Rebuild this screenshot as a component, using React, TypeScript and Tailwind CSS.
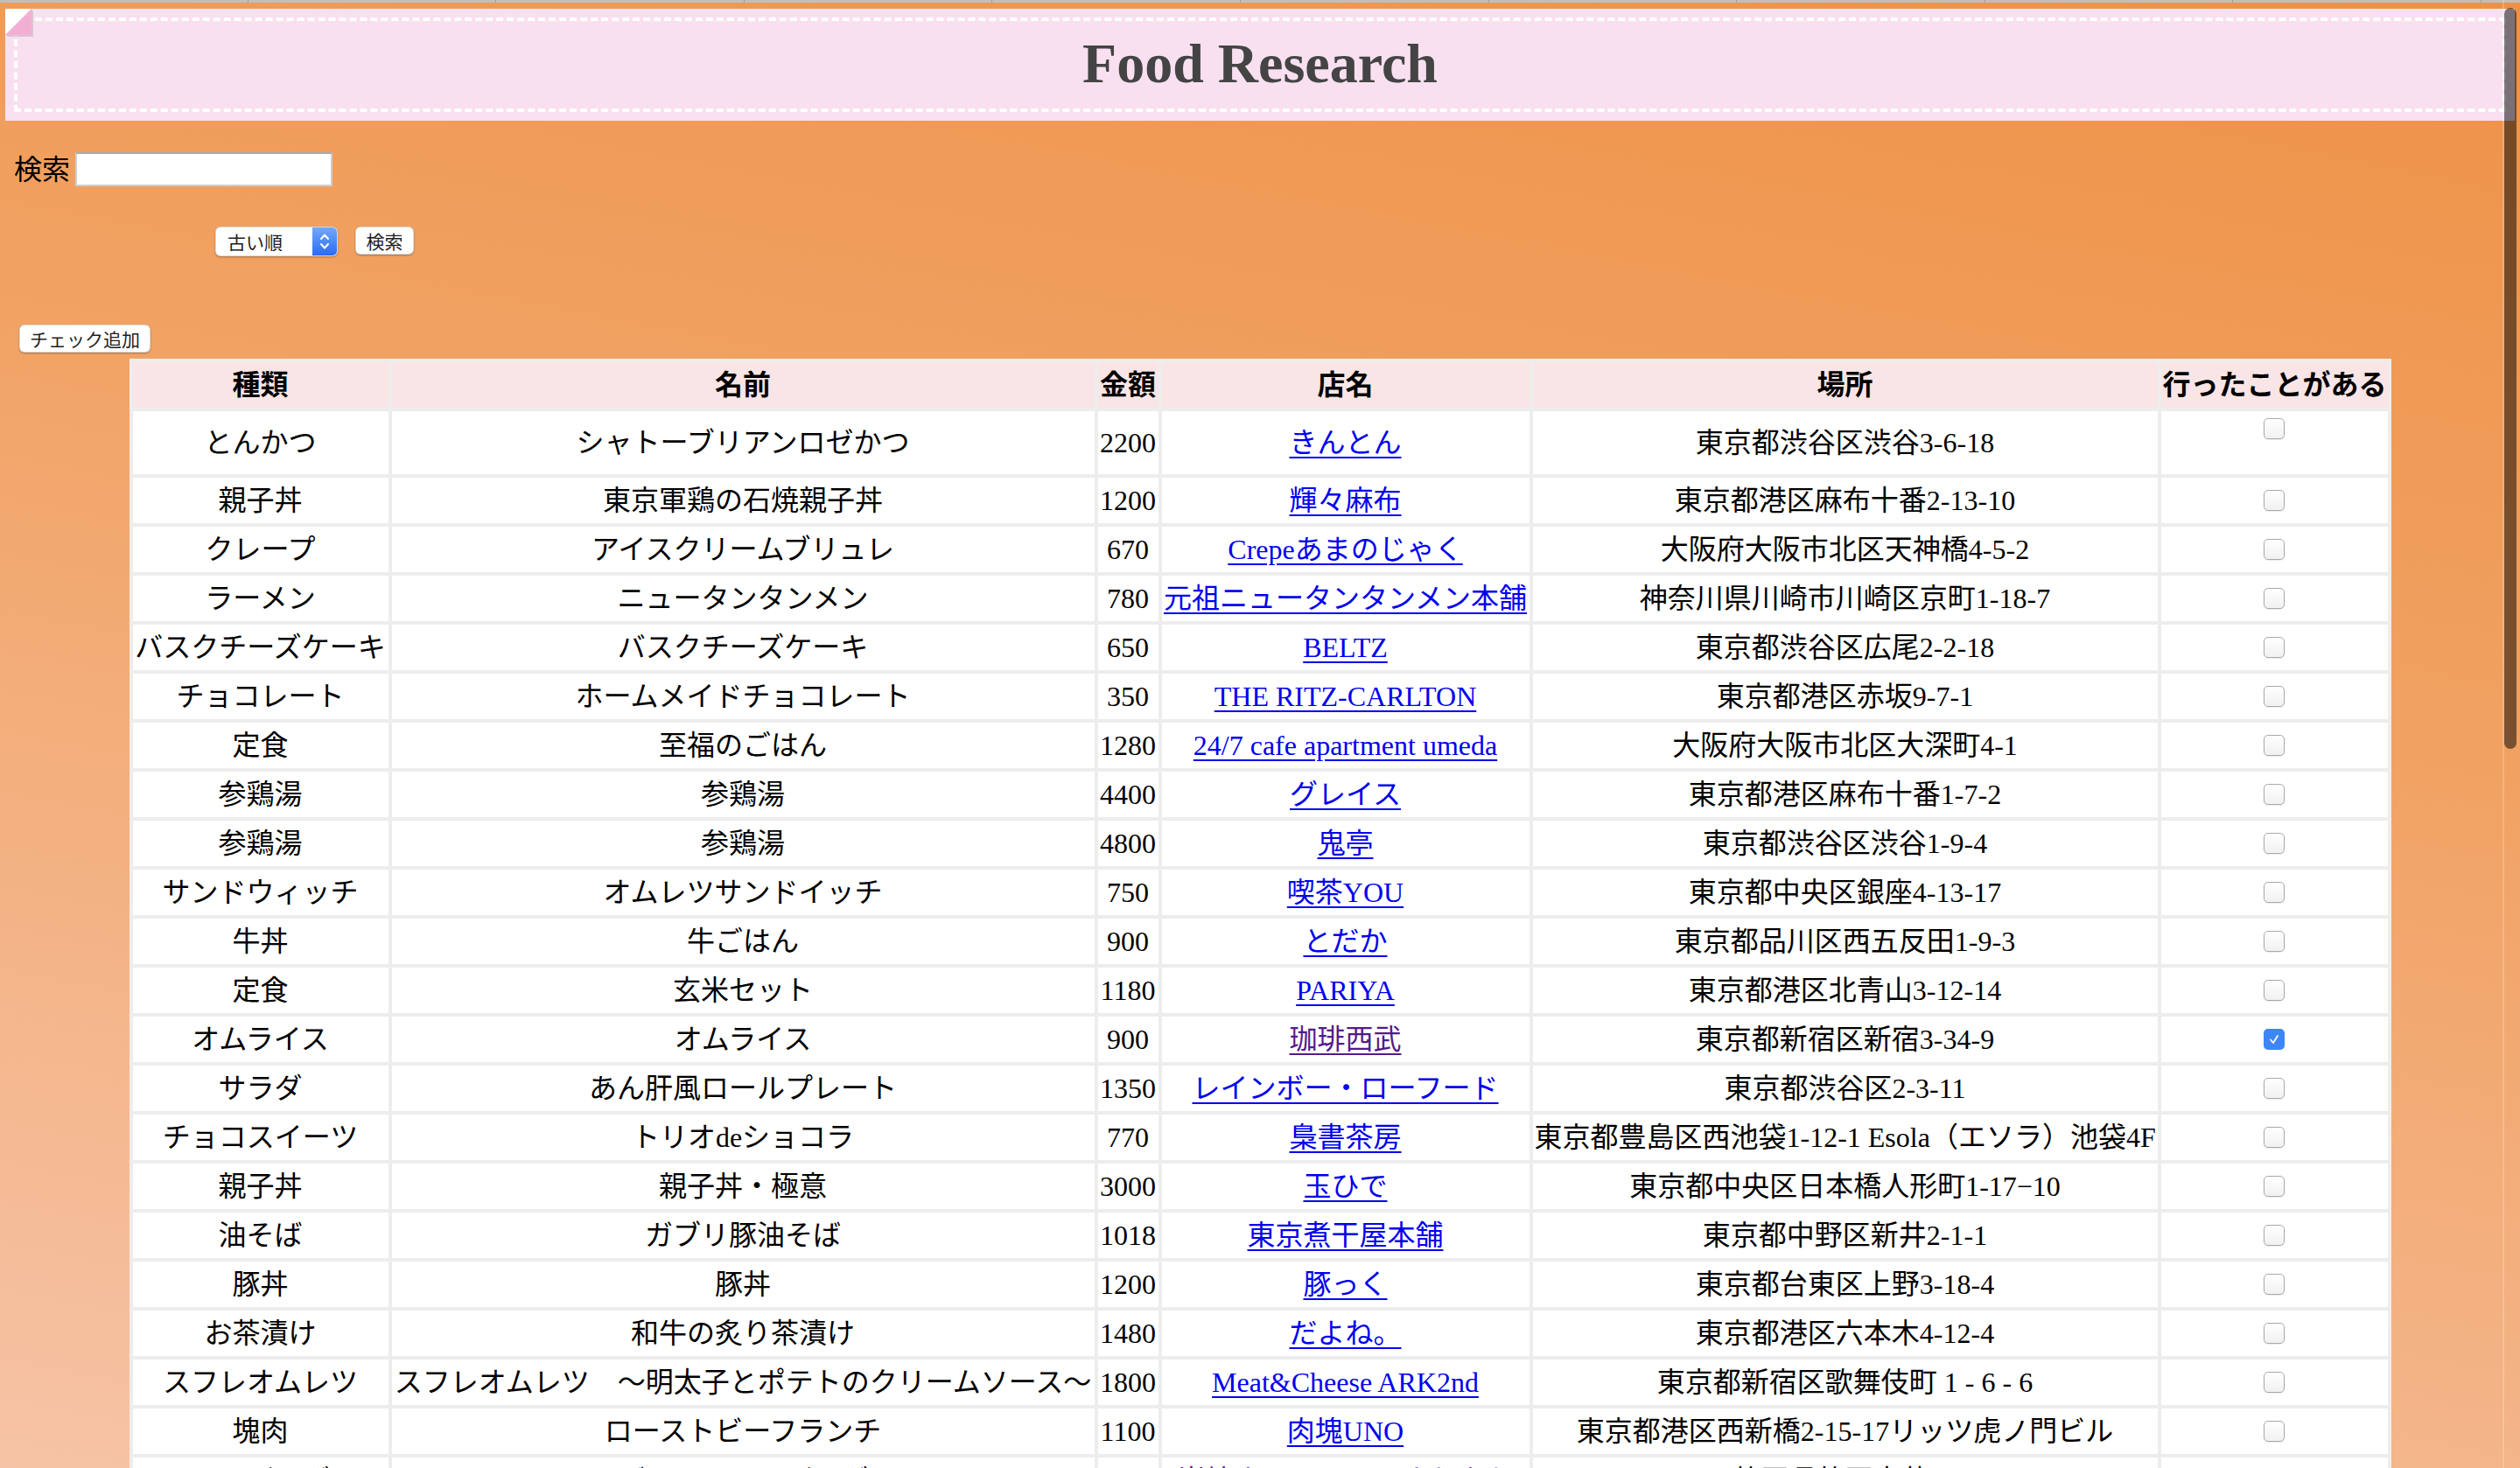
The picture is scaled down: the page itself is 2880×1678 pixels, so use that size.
import React from "react";

type Row = {
  kind: string;
  name: string;
  price: string;
  shop: string;
  place: string;
  visited?: boolean;
  checked?: boolean;
};

const ROWS: Row[] = [
  { kind: "とんかつ", name: "シャトーブリアンロゼかつ", price: "2200", shop: "きんとん", place: "東京都渋谷区渋谷3-6-18" },
  { kind: "親子丼", name: "東京軍鶏の石焼親子丼", price: "1200", shop: "輝々麻布", place: "東京都港区麻布十番2-13-10" },
  { kind: "クレープ", name: "アイスクリームブリュレ", price: "670", shop: "Crepeあまのじゃく", place: "大阪府大阪市北区天神橋4-5-2" },
  { kind: "ラーメン", name: "ニュータンタンメン", price: "780", shop: "元祖ニュータンタンメン本舗", place: "神奈川県川崎市川崎区京町1-18-7" },
  { kind: "バスクチーズケーキ", name: "バスクチーズケーキ", price: "650", shop: "BELTZ", place: "東京都渋谷区広尾2-2-18" },
  { kind: "チョコレート", name: "ホームメイドチョコレート", price: "350", shop: "THE RITZ-CARLTON", place: "東京都港区赤坂9-7-1" },
  { kind: "定食", name: "至福のごはん", price: "1280", shop: "24/7 cafe apartment umeda", place: "大阪府大阪市北区大深町4-1" },
  { kind: "参鶏湯", name: "参鶏湯", price: "4400", shop: "グレイス", place: "東京都港区麻布十番1-7-2" },
  { kind: "参鶏湯", name: "参鶏湯", price: "4800", shop: "鬼亭", place: "東京都渋谷区渋谷1-9-4" },
  { kind: "サンドウィッチ", name: "オムレツサンドイッチ", price: "750", shop: "喫茶YOU", place: "東京都中央区銀座4-13-17" },
  { kind: "牛丼", name: "牛ごはん", price: "900", shop: "とだか", place: "東京都品川区西五反田1-9-3" },
  { kind: "定食", name: "玄米セット", price: "1180", shop: "PARIYA", place: "東京都港区北青山3-12-14" },
  { kind: "オムライス", name: "オムライス", price: "900", shop: "珈琲西武", place: "東京都新宿区新宿3-34-9", visited: true, checked: true },
  { kind: "サラダ", name: "あん肝風ロールプレート", price: "1350", shop: "レインボー・ローフード", place: "東京都渋谷区2-3-11" },
  { kind: "チョコスイーツ", name: "トリオdeショコラ", price: "770", shop: "梟書茶房", place: "東京都豊島区西池袋1-12-1 Esola（エソラ）池袋4F" },
  { kind: "親子丼", name: "親子丼・極意", price: "3000", shop: "玉ひで", place: "東京都中央区日本橋人形町1-17−10" },
  { kind: "油そば", name: "ガブリ豚油そば", price: "1018", shop: "東京煮干屋本舗", place: "東京都中野区新井2-1-1" },
  { kind: "豚丼", name: "豚丼", price: "1200", shop: "豚っく", place: "東京都台東区上野3-18-4" },
  { kind: "お茶漬け", name: "和牛の炙り茶漬け", price: "1480", shop: "だよね。", place: "東京都港区六本木4-12-4" },
  { kind: "スフレオムレツ", name: "スフレオムレツ　～明太子とポテトのクリームソース～", price: "1800", shop: "Meat&Cheese ARK2nd", place: "東京都新宿区歌舞伎町 1 - 6 - 6" },
  { kind: "塊肉", name: "ローストビーフランチ", price: "1100", shop: "肉塊UNO", place: "東京都港区西新橋2-15-17リッツ虎ノ門ビル" },
  { kind: "ハンバーグ", name: "げんこつハンバーグ", price: "1500", shop: "炭焼きレストランさわやか", place: "静岡県静岡市葵区", visited: true },
];

const HEADS = ["種類", "名前", "金額", "店名", "場所", "行ったことがある"];
const COLS = ["w-[292px]", "w-[803px]", "w-[69px]", "w-[420px]", "w-[714px]", "w-[259px]"];

function FoldedCorner() {
  return (
    <svg className="absolute left-0 top-0" width="34" height="34" viewBox="0 0 34 34" aria-hidden="true">
      <polygon points="0,0 30,0 0,30" fill="#ffffff" />
      <polygon points="30,1 32,3 32,32 3,32 1,30" fill="rgba(0,0,0,0.12)" />
      <polygon points="30,0 30,30 0,30" fill="#f3afd3" />
    </svg>
  );
}

function CheckBox({ checked }: { checked?: boolean }) {
  if (checked) {
    return (
      <span className="inline-flex h-[24px] w-[24px] items-center justify-center rounded-[5px] bg-[#3d86f6]">
        <svg width="14" height="14" viewBox="0 0 14 14" aria-hidden="true">
          <path d="M3 7.5 L6 11 L11 3" fill="none" stroke="white" strokeWidth="1.8" strokeLinecap="round" strokeLinejoin="round" />
        </svg>
      </span>
    );
  }
  return (
    <span className="inline-block h-[24px] w-[24px] rounded-[5px] border-[1.5px] border-[#a9a9a9] bg-gradient-to-b from-white to-[#f1f1f1] shadow-[0_1px_1px_rgba(0,0,0,0.08)]" />
  );
}

export default function App() {
  return (
    <div className="relative h-[1678px] w-full overflow-hidden bg-[linear-gradient(191deg,#ee9147_0%,#f1a263_40%,#f6c3a6_100%)] font-['Liberation_Serif','Noto_Sans_CJK_JP',serif] text-black">
      {/* tab strip */}
      <div className="flex h-[3px] bg-[#bfbfbf]">
        {Array.from({ length: 10 }).map((_, i) => (
          <div key={i} className="h-full w-[283.6px] border-r border-[#9d9d9d]" />
        ))}
      </div>

      {/* Header */}
      <header className="relative mx-[6px] mt-[7px] bg-[#f9e0f0] p-[10px]">
        <FoldedCorner />
        <div className="flex h-[108px] items-center justify-center border-4 border-dashed border-white pb-[3px]">
          <h1 className="text-[64px] font-bold leading-none text-[#444444]">Food Research</h1>
        </div>
      </header>

      {/* Search */}
      <form onSubmit={(e) => e.preventDefault()}>
        <div className="mt-[36px] flex items-center gap-[6px] pl-[16px]">
          <label htmlFor="q" className="text-[32px] leading-none">
            検索
          </label>
          <input
            id="q"
            type="text"
            className="h-[39px] w-[294px] border-2 border-[#cdcdcd] border-t-[#a9a9a9] bg-white outline-none"
          />
        </div>

        <div className="mt-[46px] flex items-start gap-[20px] pl-[246px] font-['Noto_Sans_CJK_JP',sans-serif] text-[#1f1f1f]">
          <div className="flex h-[34px] w-[140px] items-stretch overflow-hidden rounded-[6px] border border-black/15 bg-white shadow-[0_1px_2px_rgba(0,0,0,0.3)]">
            <select className="flex-1 appearance-none bg-transparent pl-[13px] text-[21px] leading-none outline-none">
              <option>古い順</option>
              <option>新しい順</option>
            </select>
            <span className="flex w-[28px] items-center justify-center bg-gradient-to-b from-[#72a8fb] to-[#2a6af2]">
              <svg width="12" height="22" viewBox="0 0 12 22" aria-hidden="true">
                <polyline points="2,8 6,3.5 10,8" fill="none" stroke="white" strokeWidth="2" strokeLinecap="round" strokeLinejoin="round" />
                <polyline points="2,14 6,18.5 10,14" fill="none" stroke="white" strokeWidth="2" strokeLinecap="round" strokeLinejoin="round" />
              </svg>
            </span>
          </div>
          <button
            type="submit"
            className="h-[32px] w-[67px] rounded-[6px] border border-black/15 bg-white text-[21px] leading-none shadow-[0_1px_2px_rgba(0,0,0,0.3)]"
          >
            検索
          </button>
        </div>
      </form>

      <div className="mt-[78px] pl-[22px] font-['Noto_Sans_CJK_JP',sans-serif] text-[#1f1f1f]">
        <button
          type="button"
          className="h-[32px] w-[150px] rounded-[6px] border border-black/15 bg-white text-[21px] leading-none shadow-[0_1px_2px_rgba(0,0,0,0.3)]"
        >
          チェック追加
        </button>
      </div>

      {/* Table */}
      <table className="mx-auto mt-[7px] w-[2585px] table-fixed border-separate border-spacing-[4px] bg-[#ededed] text-[32px] leading-[1.2]">
        <colgroup>
          {COLS.map((c, i) => (
            <col key={i} className={c} />
          ))}
        </colgroup>
        <thead>
          <tr className="h-[52px]">
            {HEADS.map((h) => (
              <th key={h} className="whitespace-nowrap bg-[#f9e5e5] px-[2px] text-center font-bold">
                {h}
              </th>
            ))}
          </tr>
        </thead>
        <tbody>
          {ROWS.map((r, i) => (
            <tr key={i} className={i === 0 ? "h-[72px]" : "h-[52px]"}>
              <td className="whitespace-nowrap bg-white px-[2px] text-center">{r.kind}</td>
              <td className="whitespace-nowrap bg-white px-[2px] text-center">{r.name}</td>
              <td className="whitespace-nowrap bg-white px-[2px] text-center">{r.price}</td>
              <td className="whitespace-nowrap bg-white px-[2px] text-center">
                <a
                  href="#"
                  className={
                    r.visited
                      ? "text-[#551a8b] underline decoration-[2px] underline-offset-[5px]"
                      : "text-[#0000ee] underline decoration-[2px] underline-offset-[5px]"
                  }
                >
                  {r.shop}
                </a>
              </td>
              <td className="whitespace-nowrap bg-white px-[2px] text-center">{r.place}</td>
              <td className={i === 0 ? "bg-white px-[2px] pt-[8px] align-top" : "bg-white px-[2px]"}>
                <div className="flex justify-center">
                  <CheckBox checked={r.checked} />
                </div>
              </td>
            </tr>
          ))}
        </tbody>
      </table>

      {/* overlay scrollbar */}
      <div className="absolute right-[18px] top-0 h-full w-[2px] bg-white/20" />
      <div className="absolute right-[4px] top-[9px] h-[847px] w-[14px] rounded-full bg-black/50" />
    </div>
  );
}
